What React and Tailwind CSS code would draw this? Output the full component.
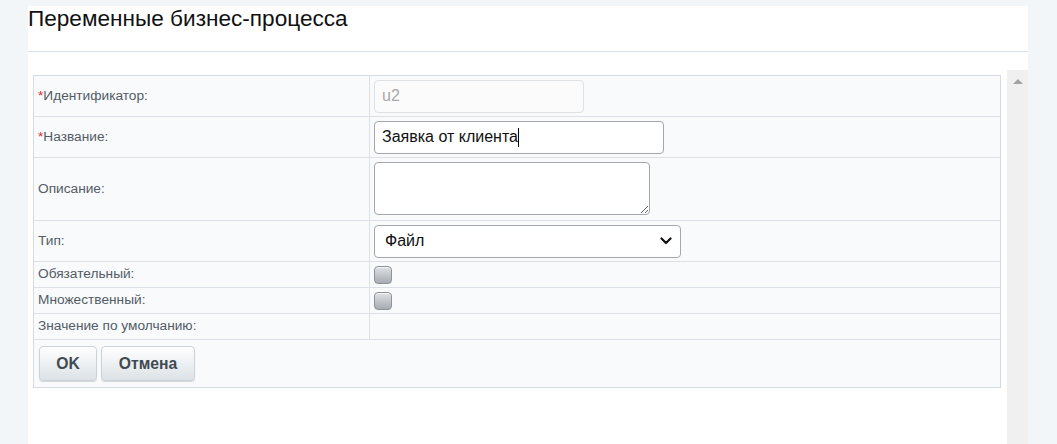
import React from 'react';

const Row = ({ label, required, height, children, last }) => (
  <div className={`flex ${height} ${last ? '' : 'border-b border-[#dce1e7]'}`}>
    <div className="w-[336px] shrink-0 border-r border-[#dce1e7] flex items-center pl-[4px] text-[13.7px] text-[#535c66]">
      {required && <span className="text-[#e02a2a]">*</span>}
      {label}
    </div>
    <div className="flex-1 flex items-center pl-[4px]">{children}</div>
  </div>
);

const Checkbox = () => (
  <div className="w-[18px] h-[18px] rounded-[4px] border border-[#8d9398] bg-gradient-to-b from-[#dfe2e5] to-[#a7acb1] shadow-[inset_0_1px_0_#f4f5f6]" />
);

const App = () => {
  return (
    <div className="w-[1057px] h-[444px] overflow-hidden bg-[#f3f6f8] pl-[28px] pt-[6px] font-['Liberation_Sans',Arial,sans-serif]">
      <div className="w-[1000px] h-[438px] bg-white flex flex-col">
        {/* Header */}
        <div className="h-[46px] border-b border-[#dde2e6] shrink-0">
          <h1 className="text-[22.6px] leading-[25px] text-[#111]">Переменные бизнес-процесса</h1>
        </div>

        {/* Body */}
        <div className="flex-1 flex pt-[18px]">
          <div className="w-[979px] pt-[5px] pl-[5px]">
            <div className="w-[968px] border border-[#d5dbe2] bg-[#f9fafb]">
              <Row label="Идентификатор:" required height="h-[41px]">
                <div className="w-[210px] h-[33px] rounded-[4px] border border-[#dfe2e5] bg-[#fbfbfb] flex items-center pl-[7px] text-[16px] text-[#a9a9a9]">
                  u2
                </div>
              </Row>
              <Row label="Название:" required height="h-[41px]">
                <div className="w-[290px] h-[33px] rounded-[4px] border border-[#a3a8ac] bg-white flex items-center pl-[7px] text-[16px] text-[#111]">
                  Заявка от клиента
                  <span className="w-px h-[19px] bg-black" />
                </div>
              </Row>
              <Row label="Описание:" height="h-[63px]">
                <textarea
                  className="w-[276px] h-[53px] rounded-[4px] border border-[#a3a8ac] bg-white resize -mt-[2px]"
                  defaultValue=""
                />
              </Row>
              <Row label="Тип:" height="h-[41px]">
                <div className="w-[307px] h-[33px] rounded-[4px] border border-[#a3a8ac] bg-white flex items-center justify-between pl-[10px] pr-[8px] text-[16px] text-[#111]">
                  <span>Файл</span>
                  <svg width="12" height="8" viewBox="0 0 12 8">
                    <path d="M1.5 1.5 L6 6 L10.5 1.5" fill="none" stroke="#111" strokeWidth="2.2" strokeLinecap="round" strokeLinejoin="round" />
                  </svg>
                </div>
              </Row>
              <Row label="Обязательный:" height="h-[26px]">
                <Checkbox />
              </Row>
              <Row label="Множественный:" height="h-[26px]">
                <Checkbox />
              </Row>
              <Row label="Значение по умолчанию:" height="h-[26px]" />
              <div className="h-[47px] flex gap-[4px] pl-[5px] pt-[6px]">
                <button className="w-[58px] h-[35px] rounded-[4px] border border-[#cbd2d8] bg-gradient-to-b from-white to-[#dce2e6] shadow-[0_1px_1px_rgba(0,0,0,0.15)] text-[15.7px] font-bold text-[#3f4a53]">
                  OK
                </button>
                <button className="w-[94px] h-[35px] rounded-[4px] border border-[#cbd2d8] bg-gradient-to-b from-white to-[#dce2e6] shadow-[0_1px_1px_rgba(0,0,0,0.15)] text-[15.7px] font-bold text-[#3f4a53]">
                  Отмена
                </button>
              </div>
            </div>
          </div>

          {/* Scrollbar */}
          <div className="w-[21px] bg-[#f0f0f0] flex justify-center pt-[9px]">
            <div className="w-0 h-0 border-l-[5px] border-r-[5px] border-b-[5px] border-l-transparent border-r-transparent border-b-[#a3a3a3]" />
          </div>
        </div>
      </div>
    </div>
  );
};

export default App;
